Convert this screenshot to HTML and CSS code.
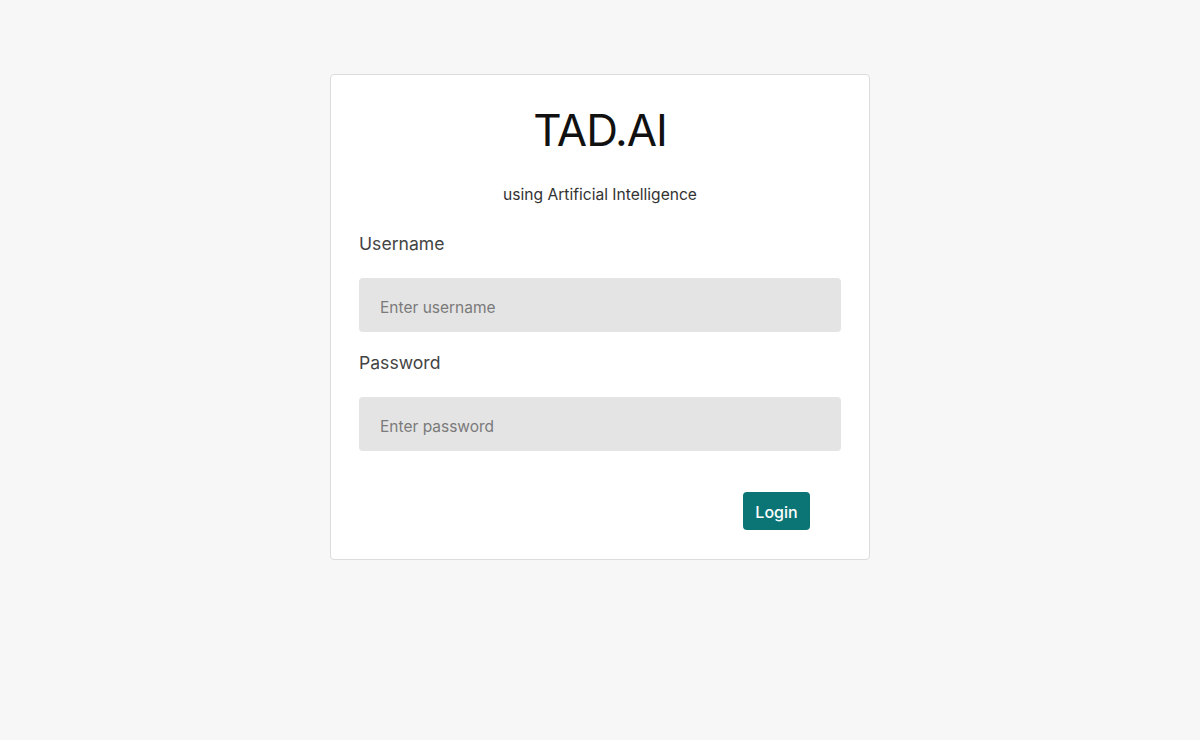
FILE: index.html
```html
<!DOCTYPE html>
<html lang="en">
<head>
<meta charset="utf-8">
<title>TAD.AI</title>
<link rel="stylesheet" href="styles.css">
</head>
<body>
  <main class="page">
    <form class="card">
      <h1 class="title">TAD.AI</h1>
      <p class="subtitle">using Artificial Intelligence</p>
      <label class="label" for="username">Username</label>
      <input class="field" id="username" type="text" placeholder="Enter username">
      <label class="label label-pw" for="password">Password</label>
      <input class="field" id="password" type="password" placeholder="Enter password">
      <div class="actions">
        <button class="btn" type="button">Login</button>
      </div>
    </form>
  </main>
</body>
</html>
```

FILE: styles.css
```css
* { box-sizing: border-box; }
html, body { margin: 0; padding: 0; }
body {
  background: #f7f7f7;
  font-family: Inter, "Liberation Sans", Arial, sans-serif;
  color: #333;
  width: 1200px;
  height: 740px;
}
.page {
  display: flex;
  justify-content: center;
  padding-top: 74px;
}
.card {
  width: 540px;
  background: #fff;
  border: 1px solid #dcdcdc;
  border-radius: 4px;
  padding: 27px 28px 29px 28px;
  display: flex;
  flex-direction: column;
}
.title {
  margin: 0;
  font-size: 44px;
  line-height: 56px;
  font-weight: 400;
  color: #111;
  text-align: center;
  letter-spacing: -1px;
}
.subtitle {
  margin: 27px 0 0;
  font-size: 15.6px;
  line-height: 20px;
  text-align: center;
  color: #333;
}
.label {
  display: block;
  margin-top: 28px;
  font-size: 17.6px;
  line-height: 22px;
  color: #444;
}
.label-pw { margin-top: 20px; }
.field {
  display: block;
  width: 100%;
  height: 54px;
  margin-top: 23px;
  border: none;
  border-radius: 4px;
  background: #e4e4e4;
  padding: 5px 21px 0;
  font-family: inherit;
  font-size: 15.5px;
  color: #333;
  outline: none;
}
.field::placeholder { color: #7a7a7a; }
.actions {
  display: flex;
  justify-content: flex-end;
  margin-top: 41px;
  padding-right: 31px;
}
.btn {
  width: 67px;
  height: 38px;
  border: none;
  border-radius: 4px;
  background: #0b7576;
  color: #fff;
  font-family: inherit;
  font-size: 16px;
  font-weight: 500;
  padding-top: 2px;
  cursor: pointer;
}
```
